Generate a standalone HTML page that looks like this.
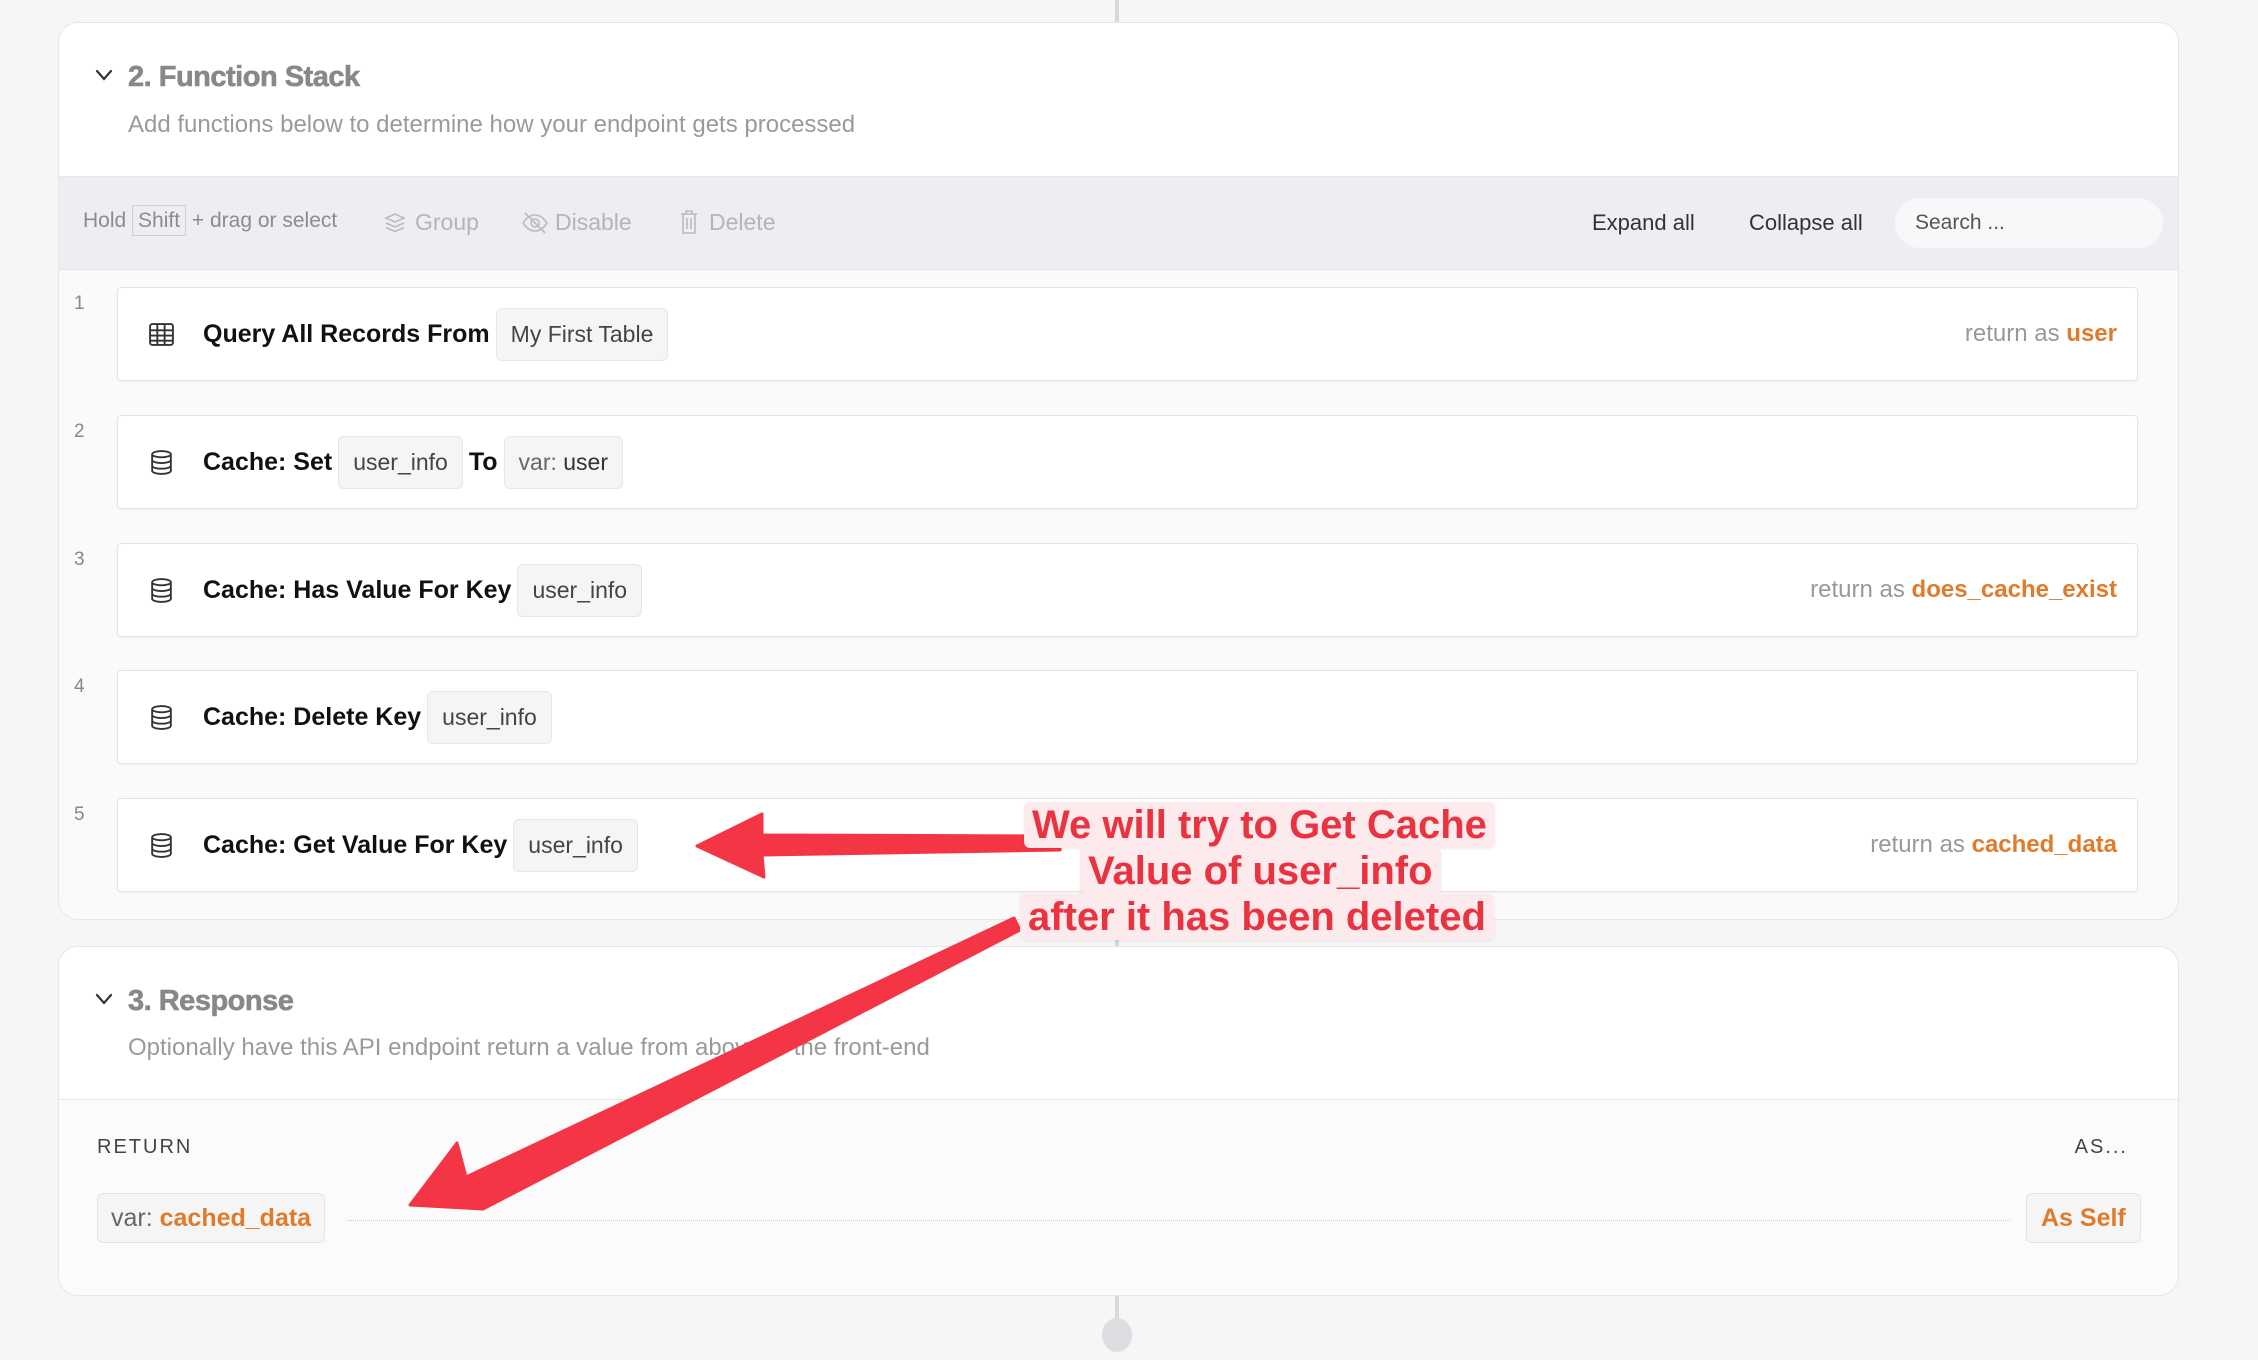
<!DOCTYPE html>
<html><head><meta charset="utf-8"><style>
*{box-sizing:border-box;margin:0;padding:0}
body{width:2258px;height:1360px;background:#f6f6f6;font-family:"Liberation Sans",sans-serif;position:relative;overflow:hidden;color:#111}
.abs{position:absolute}
.card{position:absolute;left:58px;width:2121px;background:#fff;border:1px solid #e6e6e6;border-radius:20px;overflow:hidden}
.title{position:absolute;left:69px;font-size:29px;font-weight:900;color:#888;letter-spacing:-0.5px;-webkit-text-stroke:0.6px #888}
.sub{position:absolute;left:69px;font-size:24px;color:#9a9a9a}
.chev{position:absolute;left:35px;width:20px;height:20px}
.row{position:absolute;left:58px;width:2021px;height:94px;background:#fff;border:1px solid #e4e4e4;border-radius:4px;box-shadow:0 1px 2px rgba(0,0,0,.05);display:flex;align-items:center}
.num{position:absolute;left:15px;font-size:19px;color:#888}
.ic{position:absolute;left:30px;top:33px;width:27px;height:27px}
.fn{position:absolute;left:85px;top:0;height:92px;display:flex;align-items:center;font-size:25px;font-weight:bold;color:#111;white-space:nowrap}
.chip{display:inline-block;background:#f5f5f5;border:1px solid #e6e6e6;border-radius:6px;height:53px;line-height:51px;padding:0 14px;font-size:23px;font-weight:normal;color:#444;margin:0 6px}
.ret{position:absolute;right:20px;top:0;height:92px;line-height:92px;font-size:24px;color:#999}
.ret b{color:#e07b2c}
.ann{position:absolute;background:#fdeaec;color:#ea3341;font-weight:bold;font-size:40px;line-height:46px;padding:0 8px;border-radius:6px;white-space:nowrap;box-shadow:0 1px 3px rgba(0,0,0,.08)}
</style></head><body>
<div class="abs" style="left:1115px;top:0;width:4px;height:24px;background:#d8d8d8"></div>
<div class="abs" style="left:1115px;top:918px;width:4px;height:30px;background:#d8d8d8"></div>
<div class="abs" style="left:1115px;top:1294px;width:4px;height:30px;background:#d8d8d8"></div>
<div class="abs" style="left:1102px;top:1318px;width:30px;height:34px;border-radius:50%;background:#dcdde0"></div>

<div class="card" style="top:22px;height:898px;background:#fafafa">
  <div class="abs" style="left:0;top:0;width:100%;height:154px;background:#fff;border-bottom:1px solid #e6e6e6"></div>
  <svg class="chev" style="top:42px" viewBox="0 0 20 20"><path d="M3 6l7 8 7-8" fill="none" stroke="#333" stroke-width="2.2" stroke-linecap="round"/></svg>
  <div class="title" style="top:38px">2. Function Stack</div>
  <div class="sub" style="top:88px">Add functions below to determine how your endpoint gets processed</div>
  <div class="abs" style="left:0;top:154px;width:100%;height:93px;background:#eceef1;border-bottom:1px solid #e2e4e7"></div>
  <div class="abs" style="left:24px;top:186px;font-size:21px;color:#8c8c8c;white-space:nowrap">Hold <span style="border:1px solid #cfcfcf;padding:3px 5px">Shift</span> + drag or select</div>
  <svg class="abs" style="left:324px;top:188px" width="24" height="24" viewBox="0 0 24 24" fill="none" stroke="#bbb" stroke-width="1.6"><path d="M12 3l9 4-9 4-9-4z"/><path d="M3 12l9 4 9-4"/><path d="M3 16.5l9 4 9-4"/></svg>
  <div class="abs" style="left:356px;top:186px;font-size:23px;color:#b5b5b5">Group</div>
  <svg class="abs" style="left:462px;top:188px" width="28" height="24" viewBox="0 0 28 24" fill="none" stroke="#bbb" stroke-width="1.6"><path d="M2 12c4-6 8-8 12-8s8 2 12 8c-4 6-8 8-12 8S6 18 2 12z"/><circle cx="14" cy="12" r="4"/><path d="M4 2l20 20"/></svg>
  <div class="abs" style="left:496px;top:186px;font-size:23px;color:#b5b5b5">Disable</div>
  <svg class="abs" style="left:620px;top:186px" width="20" height="26" viewBox="0 0 20 26" fill="none" stroke="#bbb" stroke-width="1.6"><path d="M2 5h16M7 5V2h6v3M4 5v19h12V5M8 9v11M12 9v11"/></svg>
  <div class="abs" style="left:650px;top:186px;font-size:23px;color:#b5b5b5">Delete</div>
  <div class="abs" style="left:1533px;top:187px;font-size:22px;color:#333">Expand all</div>
  <div class="abs" style="left:1690px;top:187px;font-size:22px;color:#333">Collapse all</div>
  <div class="abs" style="left:1836px;top:175px;width:268px;height:50px;border-radius:25px;background:#f7f8fa;font-size:21px;color:#555;line-height:50px;padding-left:20px">Search ...</div>

  <div class="num" style="top:270px">1</div>
  <div class="row" style="top:264px">
    <svg class="ic" viewBox="0 0 26 26" fill="none" stroke="#333" stroke-width="1.8"><rect x="2" y="3" width="22" height="20" rx="2"/><path d="M2 9h22M2 14h22M2 19h22M9 3v20M16 3v20"/></svg>
    <div class="fn">Query All Records From <span class="chip">My First Table</span></div>
    <div class="ret">return as <b>user</b></div>
  </div>
  <div class="num" style="top:398px">2</div>
  <div class="row" style="top:392px">
    <svg class="ic" viewBox="0 0 26 26" fill="none" stroke="#333" stroke-width="1.8"><ellipse cx="13" cy="5" rx="9" ry="3"/><path d="M4 5v16c0 1.7 4 3 9 3s9-1.3 9-3V5M4 10.5c0 1.7 4 3 9 3s9-1.3 9-3M4 16c0 1.7 4 3 9 3s9-1.3 9-3"/></svg>
    <div class="fn">Cache: Set <span class="chip">user_info</span>To<span class="chip"><span style="color:#666">var:</span> <span style="color:#333">user</span></span></div>
  </div>
  <div class="num" style="top:526px">3</div>
  <div class="row" style="top:520px">
    <svg class="ic" viewBox="0 0 26 26" fill="none" stroke="#333" stroke-width="1.8"><ellipse cx="13" cy="5" rx="9" ry="3"/><path d="M4 5v16c0 1.7 4 3 9 3s9-1.3 9-3V5M4 10.5c0 1.7 4 3 9 3s9-1.3 9-3M4 16c0 1.7 4 3 9 3s9-1.3 9-3"/></svg>
    <div class="fn">Cache: Has Value For Key <span class="chip">user_info</span></div>
    <div class="ret">return as <b>does_cache_exist</b></div>
  </div>
  <div class="num" style="top:653px">4</div>
  <div class="row" style="top:647px">
    <svg class="ic" viewBox="0 0 26 26" fill="none" stroke="#333" stroke-width="1.8"><ellipse cx="13" cy="5" rx="9" ry="3"/><path d="M4 5v16c0 1.7 4 3 9 3s9-1.3 9-3V5M4 10.5c0 1.7 4 3 9 3s9-1.3 9-3M4 16c0 1.7 4 3 9 3s9-1.3 9-3"/></svg>
    <div class="fn">Cache: Delete Key <span class="chip">user_info</span></div>
  </div>
  <div class="num" style="top:781px">5</div>
  <div class="row" style="top:775px">
    <svg class="ic" viewBox="0 0 26 26" fill="none" stroke="#333" stroke-width="1.8"><ellipse cx="13" cy="5" rx="9" ry="3"/><path d="M4 5v16c0 1.7 4 3 9 3s9-1.3 9-3V5M4 10.5c0 1.7 4 3 9 3s9-1.3 9-3M4 16c0 1.7 4 3 9 3s9-1.3 9-3"/></svg>
    <div class="fn">Cache: Get Value For Key <span class="chip">user_info</span></div>
    <div class="ret">return as <b>cached_data</b></div>
  </div>
</div>

<div class="card" style="top:946px;height:350px">
  <svg class="chev" style="top:42px" viewBox="0 0 20 20"><path d="M3 6l7 8 7-8" fill="none" stroke="#333" stroke-width="2.2" stroke-linecap="round"/></svg>
  <div class="title" style="top:38px">3. Response</div>
  <div class="sub" style="top:87px">Optionally have this API endpoint return a value from above to the front-end</div>
  <div class="abs" style="left:0;top:152px;width:100%;height:200px;background:#fbfbfb;border-top:1px solid #e6e6e6"></div>
  <div class="abs" style="left:38px;top:189px;font-size:20px;color:#444;letter-spacing:2px">RETURN</div>
  <div class="abs" style="right:50px;top:189px;font-size:20px;color:#444;letter-spacing:2px">AS...</div>
  <div class="abs" style="left:38px;top:246px;height:50px;line-height:48px;padding:0 13px;background:#f5f5f5;border:1px solid #e4e4e4;border-radius:6px;font-size:25px;color:#666">var: <b style="color:#e07b2c">cached_data</b></div>
  <div class="abs" style="left:288px;top:273px;width:1663px;border-top:1px dotted #c8c8c8"></div>
  <div class="abs" style="left:1967px;top:246px;height:50px;line-height:48px;padding:0 14px;background:#f5f5f5;border:1px solid #e4e4e4;border-radius:6px;font-size:25px;font-weight:bold;color:#e07b2c">As Self</div>
</div>

<svg class="abs" style="left:0;top:0" width="2258" height="1360">
  <polygon points="1060,836 1060,850 762,855 764,877 697,846 762,814 762,835" fill="#f43545" stroke="#f43545" stroke-width="3" stroke-linejoin="round"/>
  <polygon points="1014,918 1020,930 483,1209 410,1205 457,1143 466,1177" fill="#f43545" stroke="#f43545" stroke-width="3" stroke-linejoin="round"/>
</svg>
<div class="ann" style="left:1024px;top:802px">We will try to Get Cache</div>
<div class="ann" style="left:1080px;top:848px">Value of user_info</div>
<div class="ann" style="left:1020px;top:894px">after it has been deleted</div>
</body></html>
